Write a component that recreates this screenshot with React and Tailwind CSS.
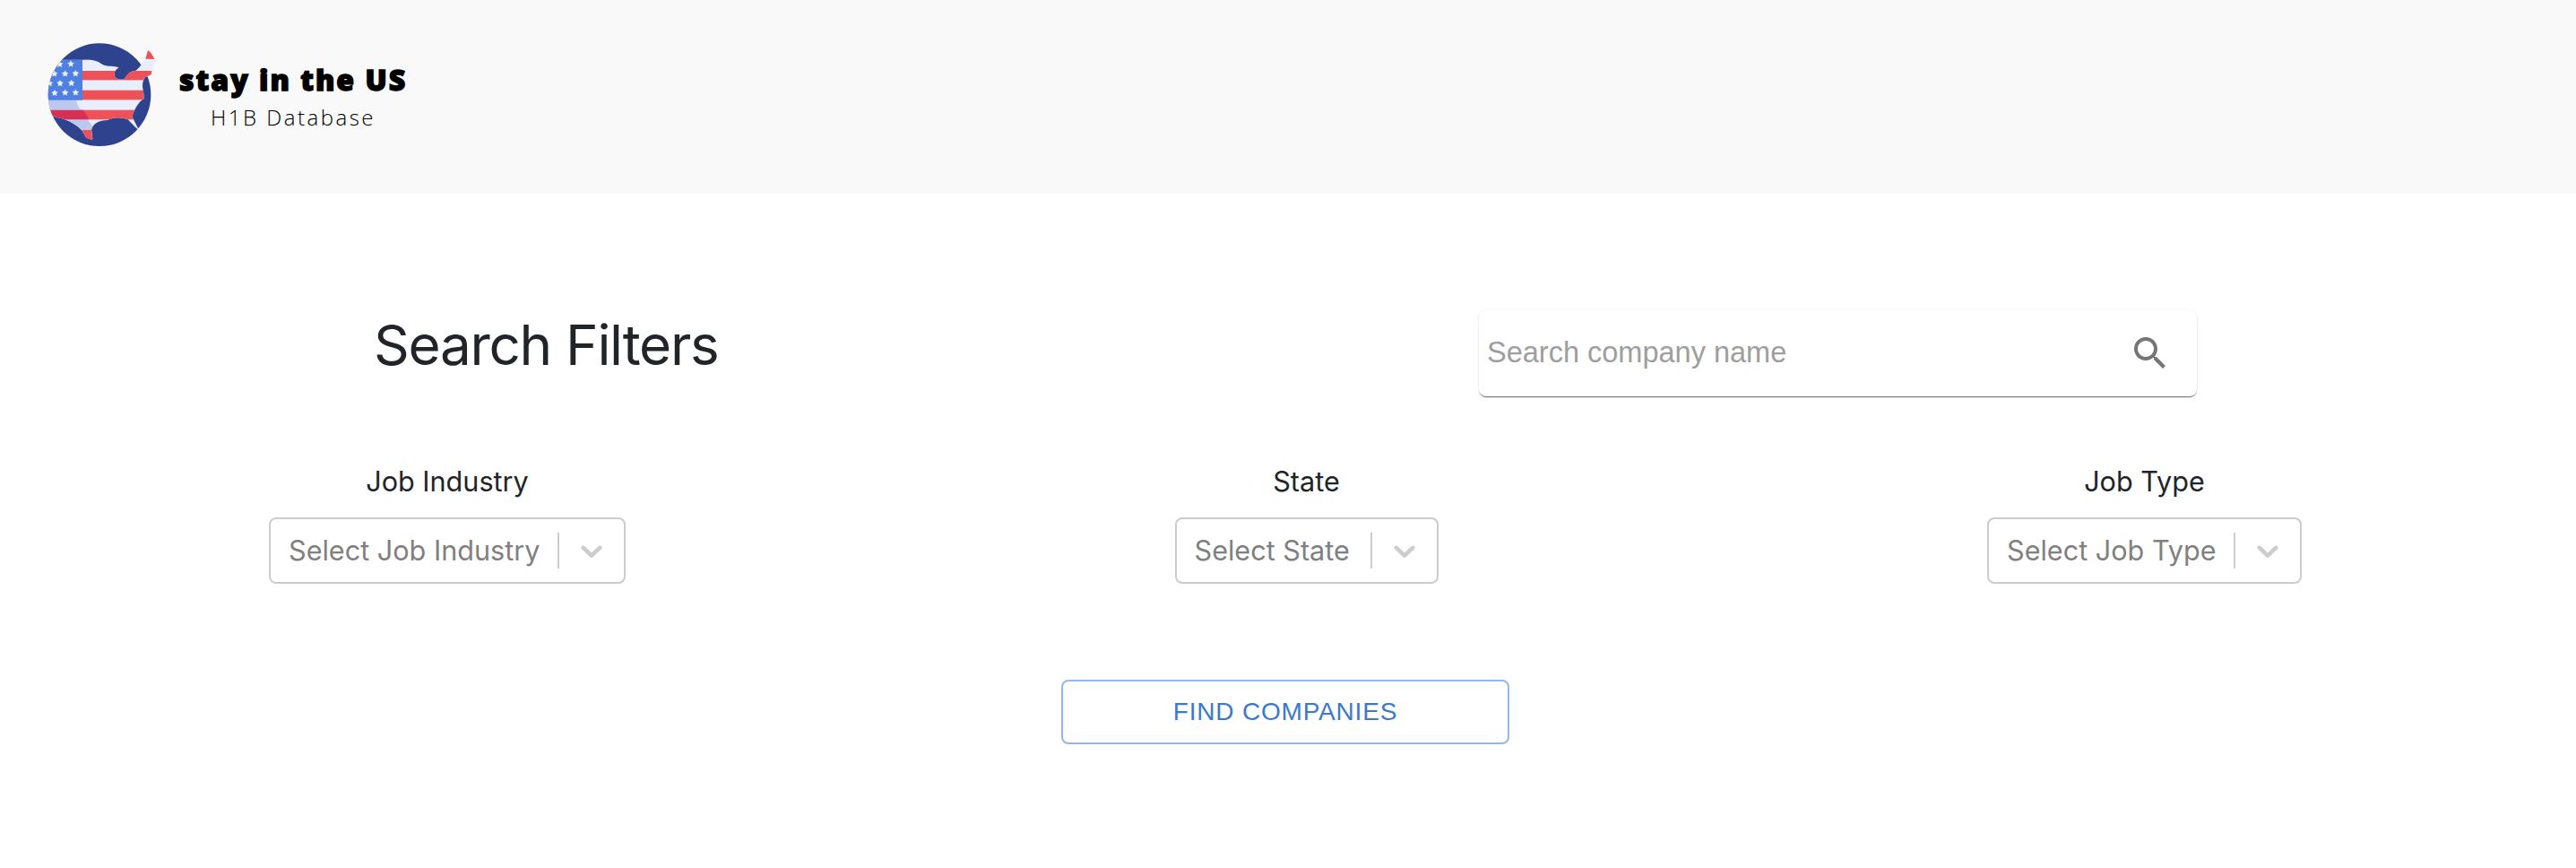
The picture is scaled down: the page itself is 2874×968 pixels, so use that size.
const STARS = [[80,125],[117,124],[62,157],[98,157],[133,156],[46,189],[81,189],[119,188],[63,221],[98,220],[133,220]];
const star = (x, y, r) => {
  const p = [];
  for (let i = 0; i < 10; i++) {
    const a = -Math.PI / 2 + (i * Math.PI) / 5;
    const R = i % 2 ? r * 0.5 : r;
    p.push(`${(x + R * Math.cos(a)).toFixed(1)},${(y + R * Math.sin(a)).toFixed(1)}`);
  }
  return p.join(" ");
};
const MAP = "M30 110 L155 110 C185 108 205 112 222 125 C240 135 262 128 278 136 C268 142 260 152 264 165 C270 178 290 180 300 170 C306 160 312 150 330 148 C345 142 352 125 365 110 L402 110 L388 148 L386 160 L366 168 C358 180 354 195 360 215 L362 240 C345 250 332 270 322 300 L345 345 C330 335 318 320 308 310 C285 300 255 302 240 312 C210 312 190 325 186 345 L190 376 C176 378 166 370 160 355 C150 338 130 325 110 315 C90 305 70 305 50 295 L30 270 Z";

function Logo() {
  return (
    <svg width="150" height="150" viewBox="0 0 450 450" className="shrink-0 -mt-[6px]">
      <defs>
        <clipPath id="map"><path d={MAP} /></clipPath>
        <clipPath id="left">
          <circle cx="213" cy="227" r="172" />
          <rect x="213" y="0" width="237" height="450" />
        </clipPath>
      </defs>
      <circle cx="213" cy="227" r="172" fill="#2f428e" />
      <path d="M367 107 L375 78 C384 84 392 96 397 108 Z" fill="#ee5159" />
      <g clipPath="url(#left)">
        <g clipPath="url(#map)">
          <rect x="0" y="100" width="420" height="290" fill="#e9eefd" />
          <rect x="0" y="147" width="420" height="31" fill="#ef5159" />
          <rect x="0" y="212" width="420" height="32" fill="#ef5159" />
          <rect x="0" y="278" width="420" height="32" fill="#ef5159" />
          <rect x="0" y="345" width="420" height="32" fill="#ef5159" />
          <path d="M30 240 L135 240 C135 262 150 275 165 298 C175 315 190 330 196 345 L200 385 L30 385 Z" fill="#bdc8ef" />
          <path d="M30 278 L158 278 C166 288 172 298 178 310 L30 310 Z" fill="#d82f55" />
          <path d="M155 345 L186 345 L190 385 L155 385 Z" fill="#ef5159" />
          <rect x="30" y="100" width="126" height="145" fill="#4f80e1" />
          {STARS.map(([x, y], i) => <polygon key={i} points={star(x, y, 12)} fill="#e9eefd" />)}
        </g>
      </g>
    </svg>
  );
}

function SelectBox({ label, placeholder, width }) {
  return (
    <div className="flex flex-col items-center">
      <div className="font-['Inter',sans-serif] text-[30.6px] leading-[40px] text-[#212529]">{label}</div>
      <div className={`${width} mt-[20px] h-[74px] flex items-center border-2 border-[#cccccc] rounded-[8px] bg-white pl-[20px]`}>
        <span className="font-['Inter',sans-serif] text-[30.6px] text-[#808080] whitespace-nowrap">{placeholder}</span>
        <span className="ml-auto w-[2px] h-[40px] bg-[#cccccc]" />
        <svg width="40" height="40" viewBox="0 0 20 20" fill="#cccccc" className="mx-[16px] shrink-0">
          <path d="M4.516 7.548c0.436-0.446 1.043-0.481 1.576 0l3.908 3.747 3.908-3.747c0.533-0.481 1.141-0.446 1.574 0 0.436 0.445 0.408 1.197 0 1.615-0.406 0.418-4.695 4.502-4.695 4.502-0.217 0.223-0.502 0.335-0.787 0.335s-0.57-0.112-0.789-0.335c0 0-4.287-4.084-4.695-4.502s-0.436-1.17 0-1.615z" />
        </svg>
      </div>
    </div>
  );
}

export default function App() {
  return (
    <div className="w-[2874px] h-[968px] bg-white overflow-hidden">
      <header className="h-[216px] bg-[#f9f9f9] flex items-center pl-[40px]">
        <Logo />
        <div className="ml-[10px] flex flex-col items-center">
          <div className="font-['Open_Sans',sans-serif] font-extrabold text-[32px] leading-[40px] tracking-[2px] text-black [-webkit-text-stroke:1.4px_black]">stay in the US</div>
          <div className="font-['Open_Sans',sans-serif] font-light text-[24px] leading-[32px] tracking-[2.5px] text-black mt-[6px]">H1B Database</div>
        </div>
      </header>
      <main>
        <div className="flex justify-between items-start pt-[130px] pl-[417px] pr-[423px]">
          <h1 className="font-['Inter',sans-serif] text-[62px] leading-[78px] tracking-[-1.3px] text-[#212529]">Search Filters</h1>
          <div className="w-[801px] h-[96px] rounded-[8px] bg-white flex items-center pl-[9px] pr-[28px] shadow-[0_2px_1px_-1px_rgba(0,0,0,0.45),0_1px_1px_0_rgba(0,0,0,0.14),0_1px_3px_0_rgba(0,0,0,0.12)]">
            <span className="font-['Liberation_Sans',sans-serif] text-[32.5px] text-[#9e9e9e] -mt-[2px]">Search company name</span>
            <svg width="48" height="48" viewBox="0 0 24 24" fill="#757575" className="ml-auto">
              <path d="M15.5 14h-.79l-.28-.27C15.41 12.59 16 11.11 16 9.5 16 5.91 13.09 3 9.5 3S3 5.91 3 9.5 5.91 16 9.5 16c1.61 0 3.09-.59 4.23-1.57l.27.28v.79l5 4.99L20.49 19l-4.99-5zm-6 0C7.01 14 5 11.99 5 9.5S7.01 5 9.5 5 14 7.01 14 9.5 11.99 14 9.5 14z" />
            </svg>
          </div>
        </div>
        <div className="flex justify-between mt-[75px] pl-[300px] pr-[306px]">
          <SelectBox label="Job Industry" placeholder="Select Job Industry" width="w-[398px]" />
          <SelectBox label="State" placeholder="Select State" width="w-[294px]" />
          <SelectBox label="Job Type" placeholder="Select Job Type" width="w-[351px]" />
        </div>
        <div className="flex justify-center mt-[107px] pr-[6px]">
          <button className="w-[500px] h-[72px] border-2 border-[#94b8e8] rounded-[8px] bg-white font-['Liberation_Sans',sans-serif] text-[28px] tracking-[0.8px] text-[#3b78d0] uppercase">
            Find Companies
          </button>
        </div>
      </main>
    </div>
  );
}
